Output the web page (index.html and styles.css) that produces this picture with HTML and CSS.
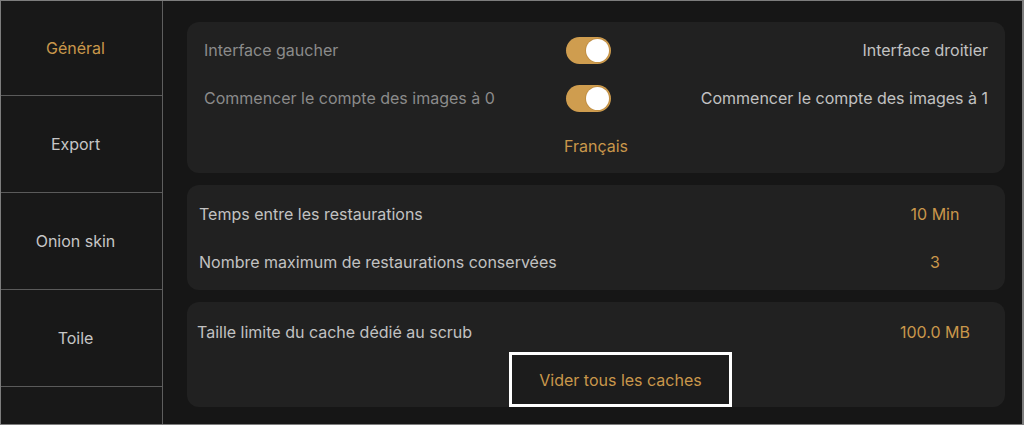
FILE: index.html
```html
<!DOCTYPE html>
<html lang="fr">
<head>
<meta charset="utf-8">
<title>Réglages</title>
<link rel="stylesheet" href="styles.css">
</head>
<body>
<div class="frame">
  <nav class="sidebar">
    <div class="nav-item first active">Général</div>
    <div class="nav-item">Export</div>
    <div class="nav-item">Onion skin</div>
    <div class="nav-item">Toile</div>
  </nav>
  <main class="main">
    <section class="panel panel-toggles">
      <div class="t-row">
        <span class="lbl-dim">Interface gaucher</span>
        <span class="toggle"><span class="knob"></span></span>
        <span class="lbl-right">Interface droitier</span>
      </div>
      <div class="t-row">
        <span class="lbl-dim">Commencer le compte des images à 0</span>
        <span class="toggle"><span class="knob"></span></span>
        <span class="lbl-right">Commencer le compte des images à 1</span>
      </div>
      <div class="t-row">
        <span></span>
        <span class="lang">Français</span>
        <span></span>
      </div>
    </section>
    <section class="panel panel-values">
      <div class="v-row">
        <span class="lbl">Temps entre les restaurations</span>
        <span class="val">10 Min</span>
      </div>
      <div class="v-row">
        <span class="lbl">Nombre maximum de restaurations conservées</span>
        <span class="val">3</span>
      </div>
    </section>
    <section class="panel panel-cache">
      <div class="v-row short">
        <span class="lbl">Taille limite du cache dédié au scrub</span>
        <span class="val">100.0 MB</span>
      </div>
      <div class="btn">Vider tous les caches</div>
    </section>
  </main>
</div>
</body>
</html>
```

FILE: styles.css
```css
* { box-sizing: border-box; }
html, body { margin: 0; padding: 0; }
body {
  width: 1024px;
  height: 425px;
  background: #171717;
  font-family: Inter, "Noto Sans", "Liberation Sans", sans-serif;
  font-size: 16px;
  overflow: hidden;
}
.frame {
  width: 1024px;
  height: 425px;
  border: 1px solid #7d7d7d;
  border-right-width: 2px;
  display: flex;
  background: #161616;
}
.sidebar {
  width: 162px;
  flex: none;
  border-right: 1px solid #5e5e5e;
  background: #181818;
  display: flex;
  flex-direction: column;
}
.nav-item {
  height: 97px;
  border-bottom: 1px solid #5a5a5a;
  display: flex;
  align-items: center;
  justify-content: center;
  padding-right: 12px;
  color: #c6c6c6;
}
.nav-item.first { height: 95px; }
.nav-item.active { color: #c9974b; }
.main {
  flex: 1;
  padding: 21px 17px 0 24px;
  display: flex;
  flex-direction: column;
  gap: 12px;
}
.panel {
  background: #212121;
  border-radius: 12px;
}
.panel-toggles {
  height: 151px;
  padding: 4px 17px 3px 17px;
}
.t-row {
  height: 48px;
  display: grid;
  grid-template-columns: 1fr auto 1fr;
  align-items: center;
}
.lbl-dim { color: #8b8b8b; }
.lbl-right { color: #c2c2c2; text-align: right; }
.toggle {
  width: 45px;
  height: 27px;
  margin-right: 15px;
  border-radius: 14px;
  background: #cf9d4f;
  position: relative;
}
.knob {
  position: absolute;
  right: 2px;
  top: 2px;
  width: 23px;
  height: 23px;
  border-radius: 50%;
  background: #ffffff;
  box-shadow: 0 0 0 1px #c08f45;
}
.lang {
  color: #c9974b;
  width: 60px;
  white-space: nowrap;
  display: flex;
  justify-content: center;
}
.panel-values {
  height: 105px;
  padding: 5px 20px 0 12px;
}
.v-row {
  height: 48px;
  display: grid;
  grid-template-columns: 1fr 100px;
  align-items: center;
}
.v-row.short { height: 40px; }
.lbl { color: #c2c2c2; }
.val { color: #c9974b; text-align: center; }
.panel-cache {
  height: 105px;
  padding: 10px 20px 0 10px;
}
.btn {
  width: 223px;
  height: 55px;
  margin-left: 312px;
  border: 3px solid #ffffff;
  background: #1c1c1c;
  color: #c9974b;
  display: flex;
  align-items: center;
  justify-content: center;
}
```
